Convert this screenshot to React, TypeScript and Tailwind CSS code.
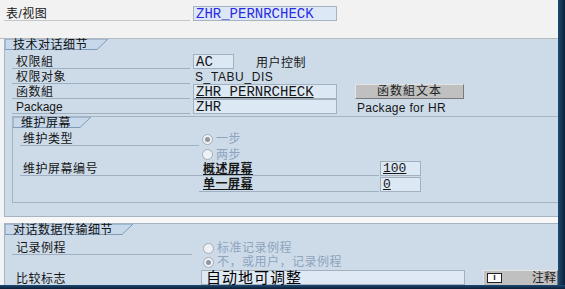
import React from 'react';

const font = "font-['Liberation_Sans','Noto_Sans_CJK_SC',sans-serif]";
const mono = "font-['Liberation_Mono','Noto_Sans_CJK_SC',monospace]";

function Tab({ text, width, w }: { text: string; width: string; w: number }) {
  return (
    <div className={`relative h-[11px] shrink-0 ${width}`}>
      <svg className="absolute inset-0" width={w} height={11} viewBox={`0 0 ${w} 11`}>
        <polygon points={`0,0 ${w},0 ${w - 11},10.5 0,10.5`} fill="#c6d8ea" stroke="#7f9bb8" strokeWidth="1" />
      </svg>
      <span className="relative block pl-[8px] leading-[12px] text-[12px] tracking-[0.5px] text-[#111]">{text}</span>
    </div>
  );
}

function Radio({ label, checked }: { label: string; checked?: boolean }) {
  return (
    <div className="flex items-center gap-[3px] text-[#8ea4bd] text-[12px] tracking-[0.5px] whitespace-nowrap">
      <span className="w-[11px] h-[11px] rounded-full border border-[#a3acb6] bg-[#eef2f6] flex items-center justify-center">
        {checked && <span className="w-[5px] h-[5px] rounded-full bg-[#8f969e]" />}
      </span>
      <span>{label}</span>
    </div>
  );
}

export default function App() {
  return (
    <div className={`w-[565px] h-[289px] overflow-hidden flex flex-col bg-[#0e2540] ${font} text-[12px] text-[#161616]`}>
      <div className="flex flex-1 min-h-0">
        <div className="flex-1 min-w-0 flex flex-col bg-[#f1f3f5]">
          {/* table / view */}
          <div className="h-[39px] shrink-0 bg-[#f2f2f2] border-b border-[#b7babd] pt-[6px]">
            <div className="flex h-[15px]">
              <div className="ml-[4px] w-[186px] border-b border-[#c4c7ca] pl-[2px] leading-[17px] tracking-[0.5px]">表/视图</div>
              <div className={`ml-[3px] w-[144px] h-[15px] bg-[#dde8f6] border border-[#a7b3c0] pl-[2px] leading-[14px] text-[14px] text-[#2a2ae6] ${mono}`}>ZHR_PERNRCHECK</div>
            </div>
          </div>

          {/* technical dialog details */}
          <div className="ml-[4px] h-[178px] shrink-0 bg-[#cddbe9] border-l border-b border-[#a6b3c0] flex flex-col">
            <Tab text="技术对话细节" width="w-[103px]" w={103} />
            <div className="mt-[4px] flex flex-col">
              <div className="flex h-[15px] items-center">
                <div className="ml-[7px] w-[178px] h-full border-b border-[#9fb0c1] pl-[4px] leading-[17px] tracking-[0.5px]">权限組</div>
                <div className={`ml-[3px] w-[41px] h-[15px] bg-[#dde8f5] border border-[#a3b0be] pl-[2px] leading-[14px] text-[14px] ${mono}`}>AC</div>
                <span className="ml-[22px] pt-[2px] tracking-[0.5px]">用户控制</span>
              </div>
              <div className="flex h-[15px] items-center">
                <div className="ml-[7px] w-[178px] h-full border-b border-[#9fb0c1] pl-[4px] leading-[17px] tracking-[0.5px]">权限对象</div>
                <span className="ml-[5px] leading-[14px] tracking-[0.6px]">S_TABU_DIS</span>
              </div>
              <div className="flex h-[15px] items-center">
                <div className="ml-[7px] w-[178px] h-full border-b border-[#9fb0c1] pl-[4px] leading-[17px] tracking-[0.5px]">函数組</div>
                <div className={`ml-[3px] w-[144px] h-[15px] bg-[#dde8f5] border border-[#a3b0be] pl-[2px] leading-[14px] text-[14px] underline ${mono}`}>ZHR_PERNRCHECK</div>
                <button className="ml-[18px] w-[109px] h-[15px] bg-[#c0c0c0] border border-t-[#e4e4e4] border-l-[#e4e4e4] border-r-[#7a7a7a] border-b-[#7a7a7a] leading-[13px] text-[12px] tracking-[1px] text-[#222]">函数組文本</button>
              </div>
              <div className="flex h-[15px] items-center">
                <div className="ml-[7px] w-[178px] h-full border-b border-[#9fb0c1] pl-[4px] leading-[17px]">Package</div>
                <div className={`ml-[3px] w-[144px] h-[15px] bg-[#dde8f5] border border-[#a3b0be] pl-[2px] leading-[14px] text-[14px] ${mono}`}>ZHR</div>
                <span className="ml-[20px] pt-[2px] tracking-[0.3px]">Package for HR</span>
              </div>
            </div>

            {/* maintenance screen */}
            <div className="mt-[2px] ml-[7px] h-[87px] border-t border-l border-b border-[#a6b3c0] flex flex-col">
              <Tab text="维护屏幕" width="w-[78px]" w={78} />
              <div className="mt-[3px] flex flex-col">
                <div className="flex h-[15px] items-center">
                  <div className="ml-[7px] w-[179px] h-full border-b border-[#9fb0c1] pl-[3px] leading-[16px] tracking-[0.5px]">维护类型</div>
                  <div className="ml-[3px] pt-[1px]"><Radio label="一步" checked /></div>
                </div>
                <div className="flex h-[15px] items-center">
                  <div className="ml-[7px] w-[179px] h-full" />
                  <div className="ml-[3px] pt-[2px]"><Radio label="两步" /></div>
                </div>
                <div className="flex h-[15px] items-center">
                  <div className="ml-[7px] w-[179px] h-full border-b border-[#9fb0c1] pl-[3px] leading-[17px] tracking-[0.5px]">维护屏幕编号</div>
                  <div className="w-[180px] h-full border-b border-[#9fb0c1] pl-[4px] leading-[17px] font-bold underline tracking-[0.5px]">概述屏幕</div>
                  <div className={`ml-[1px] w-[41px] h-[15px] bg-[#dde8f5] border border-[#a3b0be] pl-[2px] leading-[14px] text-[13px] underline ${mono}`}>100</div>
                </div>
                <div className="flex h-[16px] items-end">
                  <div className="ml-[7px] w-[179px] h-full" />
                  <div className="w-[180px] h-full border-b border-[#9fb0c1] pl-[4px] leading-[17px] font-bold underline tracking-[0.5px]">单一屏幕</div>
                  <div className={`ml-[1px] w-[41px] h-[15px] bg-[#dde8f5] border border-[#a3b0be] pl-[2px] leading-[14px] text-[13px] underline ${mono}`}>0</div>
                </div>
              </div>
            </div>
          </div>

          <div className="h-[6px] shrink-0 bg-[#f7f7f7]" />

          {/* dialog data transport details */}
          <div className="ml-[4px] flex-1 bg-[#cddbe9] border-l border-t border-[#a6b3c0] flex flex-col">
            <Tab text="对话数据传输细节" width="w-[128px]" w={128} />
            <div className="mt-[6px] flex flex-col">
              <div className="flex h-[14px] items-center">
                <div className="ml-[7px] w-[180px] h-full border-b border-[#9fb0c1] pl-[4px] leading-[15px] tracking-[0.5px]">记录例程</div>
                <div className="ml-[11px]"><Radio label="标准记录例程" /></div>
              </div>
              <div className="flex h-[14px] items-center">
                <div className="ml-[7px] w-[180px] h-full" />
                <div className="ml-[11px]"><Radio label="不，或用户，记录例程" checked /></div>
              </div>
              <div className="mt-[1px] flex h-[15px] items-center">
                <div className="ml-[7px] w-[180px] h-full pl-[4px] leading-[18px] tracking-[0.5px]">比较标志</div>
                <div className="ml-[9px] w-[264px] h-[15px] bg-[#dfe9f5] border border-[#a3b0be] pl-[4px] leading-[14px] text-[15px] text-black tracking-[1px]">自动地可调整</div>
                <div className="ml-[18px] flex-1 min-w-0 h-[16px] bg-[#c0c0c0] border border-t-[#e4e4e4] border-l-[#e4e4e4] border-r-[#7a7a7a] flex items-center overflow-hidden whitespace-nowrap">
                  <span className="ml-[3px] shrink-0 w-[15px] h-[10px] border border-[#222] bg-white flex items-center justify-center text-[9px] font-bold leading-none">i</span>
                  <span className="ml-[30px] text-[#222]">注释</span>
                </div>
              </div>
            </div>
          </div>
        </div>
        <div className="w-[7px] shrink-0 bg-gradient-to-r from-[#1e4a74] to-[#0b1f36]" />
      </div>
      <div className="h-[4px] shrink-0 bg-gradient-to-b from-[#1e4a74] to-[#0b1f36]" />
    </div>
  );
}
